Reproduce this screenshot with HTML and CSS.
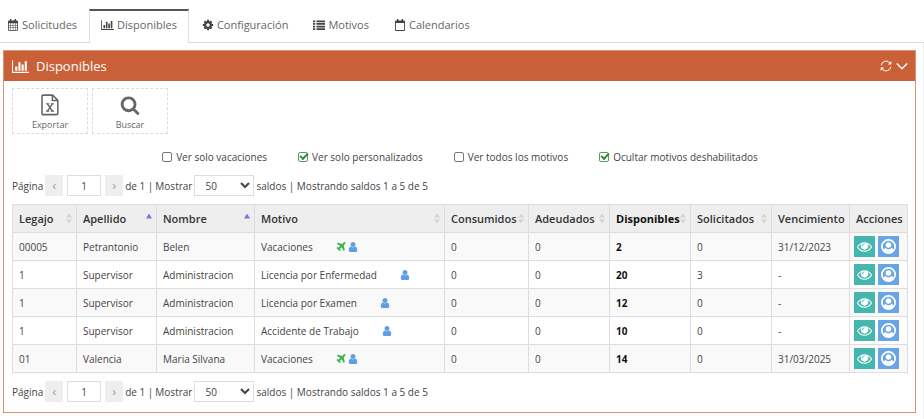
FILE: index.html
```
<!DOCTYPE html>
<html lang="es">
<head>
  <meta charset="UTF-8">
  <meta name="viewport" content="width=device-width, initial-scale=1">
  <title>Disponibles</title>
  <link rel="stylesheet" href="styles.css">
</head>
<body>

  <!-- Iconos -->
  <svg class="sprite" aria-hidden="true">
    <symbol id="i-calendar" viewBox="0 0 12 12">
      <path fill-rule="evenodd" d="M2 1.500h8q1 0 1 1v8.500q0 1-1 1H2q-1 0-1-1V2.500q0-1 1-1zM1.800 4.200v1.900h1.700V4.200zm2.200 0v1.900h1.800V4.200zm2.300 0v1.900H8V4.200zm2.200 0v1.900h1.700V4.200zM1.800 6.600v1.900h1.700V6.600zm2.200 0v1.900h1.800V6.600zm2.300 0v1.900H8V6.600zm2.200 0v1.900h1.700V6.600zM1.800 9v2.200h1.700V9zm2.200 0v2.200h1.800V9zm2.300 0v2.200H8V9zm2.200 0v2.200h1.700V9z"/>
      <path d="M3 0h1.400v3H3zM7.600 0H9v3H7.600z"/>
    </symbol>
    <symbol id="i-calendar-o" viewBox="0 0 12 12">
      <path fill-rule="evenodd" d="M2 1.500h8q1 0 1 1V11q0 1-1 1H2q-1 0-1-1V2.500q0-1 1-1zM1.900 4v7.100h8.200V4z"/>
      <path d="M3 0h1.400v3H3zM7.600 0H9v3H7.600z"/>
    </symbol>
    <symbol id="i-chart" viewBox="0 0 2048 1792">
      <path d="M640 896v512h-256v-512h256zm384-512v1024h-256v-1024h256zm1024 1152v128h-2048v-1536h128v1408h1920zm-640-896v768h-256v-768h256zm384-384v1152h-256v-1152h256z"/>
    </symbol>
    <symbol id="i-cog" viewBox="0 0 1792 1792">
      <path d="M1152 896q0-106-75-181t-181-75-181 75-75 181 75 181 181 75 181-75 75-181zm512-109v222q0 12-8 23t-20 13l-185 28q-19 54-39 91 35 50 107 138 10 12 10 25t-9 23q-27 37-99 108t-94 71q-12 0-26-9l-138-108q-44 23-91 38-16 136-29 186-7 28-36 28h-222q-14 0-24.500-8.500t-11.500-21.500l-28-184q-49-16-90-37l-141 107q-10 9-25 9-14 0-25-11-126-114-165-168-7-10-7-23 0-12 8-23 15-21 51-66.500t54-70.500q-27-50-41-99l-183-27q-13-2-21-12.500t-8-23.500v-222q0-12 8-23t19-13l186-28q14-46 39-92-40-57-107-138-10-12-10-24 0-10 9-23 26-36 98.500-107.500t94.500-71.500q13 0 26 10l138 107q44-23 91-38 16-136 29-186 7-28 36-28h222q14 0 24.500 8.500t11.500 21.500l28 184q49 16 90 37l142-107q9-9 24-9 13 0 25 10 129 119 165 170 7 8 7 22 0 12-8 23-15 21-51 66.500t-54 70.500q26 50 41 98l183 28q13 2 21 12.500t8 23.500z"/>
    </symbol>
    <symbol id="i-list" viewBox="0 0 12 12">
      <path d="M0 1.500h2.200v1.700H0zM3.500 1.500H12v1.700H3.500zM0 4.100h2.200v1.700H0zM3.500 4.100H12v1.700H3.500zM0 6.700h2.200v1.700H0zM3.500 6.700H12v1.700H3.500zM0 9.300h2.200V11H0zM3.500 9.300H12V11H3.500z"/>
    </symbol>
    <symbol id="i-refresh" viewBox="0 0 12 12">
      <path d="M1.200 5.200A4.900 4.900 0 0 1 9.600 2.600M10.800 6.800A4.900 4.900 0 0 1 2.400 9.400" fill="none" stroke="currentColor" stroke-width="1"/>
      <path d="M11.300 1v3.500H7.900zM.7 11V7.500h3.400z"/>
    </symbol>
    <symbol id="i-down" viewBox="0 0 12 12">
      <path d="M.8 3.500L6 8.700l5.200-5.200" fill="none" stroke="currentColor" stroke-width="1.500"/>
    </symbol>
    <symbol id="i-excel" viewBox="0 0 20 24">
      <path d="M2.500 1.200h10.300l5.700 5.600v14.500q0 1.200-1.200 1.200H2.500q-1.200 0-1.200-1.200V2.400q0-1.200 1.200-1.200zM12.600 1.500v5.600h5.700" fill="none" stroke="currentColor" stroke-width="1.700"/>
      <path d="M7.200 10.700l5.400 8M12.600 10.700l-5.400 8" fill="none" stroke="currentColor" stroke-width="1.600"/>
      <path d="M5.600 10h3.600v1.300H5.600zM11 10h3.400v1.300H11zM5.600 18h3.400v1.300H5.600zM10.800 18h3.600v1.300h-3.600z"/>
    </symbol>
    <symbol id="i-search" viewBox="0 0 1792 1792">
      <path d="M1216 832q0-185-131.500-316.500t-316.500-131.500-316.500 131.500-131.500 316.500 131.500 316.500 316.500 131.500 316.500-131.500 131.500-316.500zm512 832q0 52-38 90t-90 38q-54 0-90-38l-343-342q-179 124-399 124-143 0-273.500-55.500t-225-150-150-225-55.500-273.500 55.500-273.500 150-225 225-150 273.500-55.500 273.500 55.500 225 150 150 225 55.500 273.500q0 220-124 399l343 343q37 37 37 90z"/>
    </symbol>
    <symbol id="i-plane" viewBox="128 128 1536 1536">
      <path d="M1568 160q44 52 12 148t-108 172l-161 161 160 696q5 19-12 33l-128 96q-7 6-19 6-4 0-7-1-15-3-21-16l-279-508-259 259 53 194q5 17-8 31l-96 96q-9 9-23 9h-2q-15-2-24-13l-189-252-252-189q-11-7-13-23-1-13 9-25l96-97q9-9 23-9 6 0 8 1l194 53 259-259-508-279q-14-8-17-24-2-16 9-27l128-128q14-13 30-8l665 159 160-160q76-76 172-108t148 12z"/>
    </symbol>
    <symbol id="i-user" viewBox="128 128 1536 1536">
      <path d="M1536 1399q0 109-62.500 187t-150.500 78h-854q-88 0-150.500-78t-62.500-187q0-85 8.500-160.500t31.500-152 58.500-131 94-89 134.500-34.500q131 128 313 128t313-128q76 0 134.500 34.500t94 89 58.500 131 31.500 152 8.500 160.500zm-256-887q0 159-112.500 271.500t-271.500 112.500-271.500-112.500-112.500-271.500 112.500-271.500 271.500-112.500 271.500 112.500 112.500 271.500z"/>
    </symbol>
    <symbol id="i-eye" viewBox="0 0 1792 1792">
      <path d="M1664 960q-152-236-381-353 61 104 61 225 0 185-131.500 316.500t-316.500 131.500-316.500-131.500-131.500-316.500q0-121 61-225-229 117-381 353 133 205 333.500 326.500t434.500 121.500 434.500-121.500 333.500-326.500zm-720-384q0-20-14-34t-34-14q-125 0-214.500 89.500t-89.500 214.500q0 20 14 34t34 14 34-14 14-34q0-86 61-147t147-61q20 0 34-14t14-34zm848 384q0 34-20 69-140 230-376.500 368.500t-499.500 138.500-499.500-139-376.500-368q-20-35-20-69t20-69q140-229 376.500-368t499.500-139 499.500 139 376.500 368q20 35 20 69z"/>
    </symbol>
    <symbol id="i-profile" viewBox="0 0 14 14">
      <circle cx="7" cy="7" r="6.200" fill="none" stroke="currentColor" stroke-width="1.600"/>
      <circle cx="7" cy="5.600" r="2.600"/>
      <path d="M2 10.600C2.600 9.500 3.300 8.600 4.200 8.500Q7 10.900 9.800 8.500c.9.1 1.600 1 2.200 2.100Q10 13.400 7 13.400T2 10.600z"/>
    </symbol>
  </svg>

  <nav class="tabs">
    <a class="tab" href="#"><svg class="icon"><use href="#i-calendar"/></svg>Solicitudes</a>
    <a class="tab active" href="#"><svg class="icon wide"><use href="#i-chart"/></svg>Disponibles</a>
    <a class="tab" href="#"><svg class="icon"><use href="#i-cog"/></svg>Configuración</a>
    <a class="tab" href="#"><svg class="icon"><use href="#i-list"/></svg>Motivos</a>
    <a class="tab" href="#"><svg class="icon"><use href="#i-calendar-o"/></svg>Calendarios</a>
  </nav>

  <main class="contenido">
    <section class="panel">
      <header class="panel-header">
        <svg class="icon"><use href="#i-chart"/></svg>
        <h1>Disponibles</h1>
        <button type="button" class="tool" aria-label="Actualizar"><svg class="icon"><use href="#i-refresh"/></svg></button>
        <button type="button" class="tool" aria-label="Contraer"><svg class="icon"><use href="#i-down"/></svg></button>
      </header>

      <div class="panel-body">
        <div class="acciones">
          <button type="button" class="icon-btn"><svg><use href="#i-excel"/></svg>Exportar</button>
          <button type="button" class="icon-btn"><svg><use href="#i-search"/></svg>Buscar</button>
        </div>

        <div class="filtros">
          <label><input type="checkbox">Ver solo vacaciones</label>
          <label><input type="checkbox" checked>Ver solo personalizados</label>
          <label><input type="checkbox">Ver todos los motivos</label>
          <label><input type="checkbox" checked>Ocultar motivos deshabilitados</label>
        </div>

        <div class="paginador">
          <label for="pagina1">Página</label>
          <button type="button" class="flecha" aria-label="Anterior">‹</button>
          <input id="pagina1" class="pagina" type="text" value="1">
          <button type="button" class="flecha" aria-label="Siguiente">›</button>
          <span>de 1 |</span>
          <label for="mostrar1">Mostrar</label>
          <select id="mostrar1"><option>50</option></select>
          <span>saldos | Mostrando saldos 1 a 5 de 5</span>
        </div>

        <table class="saldos">
          <colgroup>
            <col class="c-legajo">
            <col class="c-apellido">
            <col class="c-nombre">
            <col>
            <col class="c-consumidos">
            <col class="c-numero">
            <col class="c-numero">
            <col class="c-numero">
            <col class="c-vencimiento">
            <col class="c-acciones">
          </colgroup>
          <thead>
            <tr>
              <th><button type="button" class="orden">Legajo</button></th>
              <th><button type="button" class="orden asc">Apellido</button></th>
              <th><button type="button" class="orden asc">Nombre</button></th>
              <th><button type="button" class="orden">Motivo</button></th>
              <th><button type="button" class="orden">Consumidos</button></th>
              <th><button type="button" class="orden">Adeudados</button></th>
              <th class="fuerte"><button type="button" class="orden">Disponibles</button></th>
              <th><button type="button" class="orden">Solicitados</button></th>
              <th>Vencimiento</th>
              <th>Acciones</th>
            </tr>
          </thead>
          <tbody id="filas"></tbody>
        </table>

        <div class="paginador">
          <label for="pagina2">Página</label>
          <button type="button" class="flecha" aria-label="Anterior">‹</button>
          <input id="pagina2" class="pagina" type="text" value="1">
          <button type="button" class="flecha" aria-label="Siguiente">›</button>
          <span>de 1 |</span>
          <label for="mostrar2">Mostrar</label>
          <select id="mostrar2"><option>50</option></select>
          <span>saldos | Mostrando saldos 1 a 5 de 5</span>
        </div>
      </div>
    </section>
  </main>

  <script src="script.js"></script>
</body>
</html>
```
FILE: script.js
```
const saldos = [
  { legajo: "00005", apellido: "Petrantonio", nombre: "Belen", motivo: "Vacaciones", vacaciones: true, disponibles: 2, solicitados: 0, vencimiento: "31/12/2023" },
  { legajo: "1", apellido: "Supervisor", nombre: "Administracion", motivo: "Licencia por Enfermedad", vacaciones: false, disponibles: 20, solicitados: 3, vencimiento: "-" },
  { legajo: "1", apellido: "Supervisor", nombre: "Administracion", motivo: "Licencia por Examen", vacaciones: false, disponibles: 12, solicitados: 0, vencimiento: "-" },
  { legajo: "1", apellido: "Supervisor", nombre: "Administracion", motivo: "Accidente de Trabajo", vacaciones: false, disponibles: 10, solicitados: 0, vencimiento: "-" },
  { legajo: "01", apellido: "Valencia", nombre: "Maria Silvana", motivo: "Vacaciones", vacaciones: true, disponibles: 14, solicitados: 0, vencimiento: "31/03/2025" }
];

function icono(nombre, clase) {
  return `<svg class="icon ${clase}"><use href="#i-${nombre}"/></svg>`;
}

function mostrarSaldos() {
  document.getElementById('filas').innerHTML = saldos.map(s => `
    <tr>
      <td>${s.legajo}</td>
      <td>${s.apellido}</td>
      <td>${s.nombre}</td>
      <td>
        <div class="motivo">
          <span>${s.motivo}</span>
          <span class="marcas">${s.vacaciones ? icono('plane', 'verde') : ''}${icono('user', 'azul')}</span>
        </div>
      </td>
      <td>0</td>
      <td>0</td>
      <td class="fuerte">${s.disponibles}</td>
      <td>${s.solicitados}</td>
      <td>${s.vencimiento}</td>
      <td class="botones">
        <div>
          <button type="button" class="ver" aria-label="Ver">${icono('eye', '')}</button>
          <button type="button" class="perfil" aria-label="Perfil">${icono('profile', '')}</button>
        </div>
      </td>
    </tr>`).join('');
}

mostrarSaldos();
```
FILE: styles.css
```
*,
*::after {
  box-sizing: border-box;
}

body {
  margin: 0;
  font-family: "Open Sans", sans-serif;
  font-size: 10px;
  line-height: 16px;
  color: #444;
  background-color: #fff;
}

button,
input,
select {
  font: inherit;
  color: inherit;
  margin: 0;
}

button {
  cursor: pointer;
}

.sprite {
  display: none;
}

.icon {
  width: 12px;
  height: 12px;
  fill: currentColor;
  flex: none;
}

/* Solapas */
.tabs {
  display: flex;
  height: 43px;
  padding-top: 9px;
  border-bottom: 1px solid #ddd;
  font-size: 11px;
}

.tab {
  display: flex;
  align-items: center;
  gap: 3px;
  padding: 0 12px 4px 13px;
  margin-bottom: -1px;
  border-top: 2px solid transparent;
  color: #666;
  text-decoration: none;
}

.tab:first-child {
  padding-left: 7px;
}

.tab .icon {
  color: #444;
}

.tab .icon.wide {
  width: 13px;
}

.tab.active {
  padding: 0 11px 4px;
  border: 1px solid #ddd;
  border-top: 2px solid #555;
  border-bottom: none;
  background-color: #fff;
}

/* Panel */
.contenido {
  min-height: calc(100vh - 43px);
  padding: 7px 7px 6px 3px;
  border-right: 1px solid #eee;
}

.panel {
  border: 1px solid #dd8f70;
}

.panel-header {
  display: flex;
  align-items: center;
  gap: 4px;
  height: 30px;
  padding: 0 7px 0 8px;
  background-color: #ca6037;
  color: #fff;
}

.panel-header > .icon {
  width: 17px;
  height: 15px;
}

.panel-header h1 {
  flex: 1;
  margin: 0 0 0 3px;
  font-size: 13px;
  line-height: 20px;
  font-weight: 400;
}

.tool {
  display: flex;
  padding: 0;
  border: none;
  background: none;
}

.panel-body {
  padding: 7px 7px 10px 8px;
}

.acciones {
  display: flex;
  gap: 4px;
}

.icon-btn {
  display: flex;
  flex-direction: column;
  align-items: center;
  gap: 2px;
  width: 76px;
  height: 46px;
  padding: 5px 0 0;
  border: 1px dashed #ddd;
  background-color: #fff;
  color: #666;
  font-size: 9px;
  line-height: 14px;
}

.icon-btn svg {
  width: 20px;
  height: 22px;
  fill: currentColor;
}

.filtros {
  display: flex;
  justify-content: center;
  gap: 31px;
  padding: 15px 0 10px;
}

.filtros label {
  display: flex;
  align-items: center;
  gap: 4px;
}

.filtros input {
  appearance: none;
  display: grid;
  width: 10px;
  height: 10px;
  border: 1px solid #777;
  border-radius: 2px;
}

.filtros input:checked {
  border-color: #5a9c5c;
}

.filtros input:checked::after {
  content: "";
  width: 8px;
  height: 5px;
  margin-left: 1px;
  border: solid #2f8a35;
  border-width: 0 0 2px 2px;
  transform: rotate(-45deg);
}

/* Paginador */
.paginador {
  display: flex;
  align-items: center;
  gap: 2px;
}

.flecha {
  width: 18px;
  height: 21px;
  padding: 0 0 2px;
  border: none;
  background-color: #eee;
  color: #999;
  font-size: 13px;
}

.pagina {
  width: 34px;
  height: 21px;
  margin: 0 2px;
  padding: 0;
  border: 1px solid #ddd;
  text-align: center;
}

.paginador select {
  width: 60px;
  height: 21px;
  padding: 0 0 0 6px;
  border: 1px solid #ddd;
  background-color: #fff;
}

/* Tabla */
.saldos {
  width: 100%;
  margin: 8px 0;
  border-collapse: collapse;
  table-layout: fixed;
}

.c-legajo {
  width: 64px;
}

.c-apellido {
  width: 80px;
}

.c-nombre {
  width: 98px;
}

.c-consumidos {
  width: 84px;
}

.c-numero {
  width: 81px;
}

.c-vencimiento {
  width: 78px;
}

.c-acciones {
  width: 58px;
}

.saldos th,
.saldos td {
  height: 28px;
  padding: 0 6px;
  border: 1px solid #ddd;
  text-align: left;
  white-space: nowrap;
}

.saldos th {
  padding-right: 4px;
  background-color: #eee;
  color: #333;
  font-size: 11px;
  font-weight: 600;
}

.saldos tbody tr:nth-child(odd) {
  background-color: #f9f9f9;
}

.saldos .fuerte {
  color: #111;
  font-weight: 700;
}

.orden {
  display: flex;
  justify-content: space-between;
  align-items: center;
  width: 100%;
  padding: 0;
  border: none;
  background: none;
}

.orden::after {
  content: "";
  width: 6px;
  height: 10px;
  background-color: #d4d4d4;
  clip-path: polygon(50% 0, 100% 40%, 0 40%, 0 60%, 100% 60%, 50% 100%, 0 60%, 0 40%);
}

.orden.asc::after {
  height: 5px;
  margin-bottom: 5px;
  background-color: #7478dc;
  clip-path: polygon(50% 0, 100% 100%, 0 100%);
}

.motivo {
  display: flex;
  align-items: center;
  gap: 23px;
}

.marcas {
  display: flex;
  gap: 2px;
}

.marcas .icon {
  width: 10px;
  height: 10px;
}

.verde {
  color: #3bb54a;
}

.azul {
  color: #5c9fe5;
}

.saldos .botones {
  padding: 0 4px;
}

.botones div {
  display: flex;
  gap: 3px;
}

.botones button {
  display: grid;
  place-items: center;
  width: 21px;
  height: 21px;
  padding: 0;
  border: none;
  color: #fff;
}

.botones .icon {
  width: 15px;
  height: 15px;
}

.ver {
  background-color: #44b6ae;
}

.perfil {
  background-color: #67a5e5;
}
```
